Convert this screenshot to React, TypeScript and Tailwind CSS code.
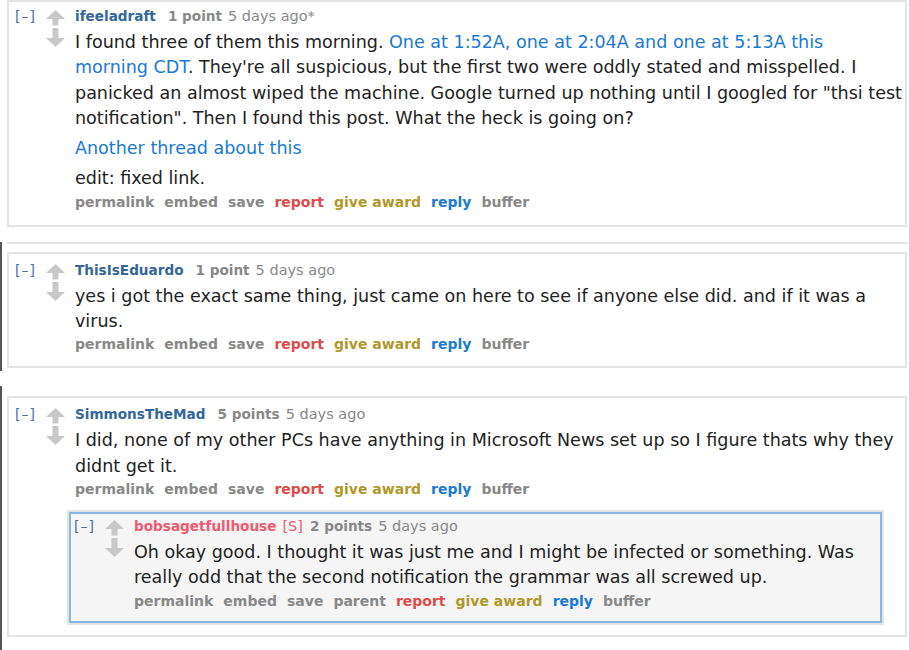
import React from "react";

type Btn = { label: string; color: string };

const GRAY = "#888888";

const baseButtons: Btn[] = [
    { label: "permalink", color: GRAY },
    { label: "embed", color: GRAY },
    { label: "save", color: GRAY },
    { label: "report", color: "#de4b4b" },
    { label: "give award", color: "#b0982a" },
    { label: "reply", color: "#1a7ad4" },
    { label: "buffer", color: GRAY },
];

const nestedButtons: Btn[] = [
    { label: "permalink", color: GRAY },
    { label: "embed", color: GRAY },
    { label: "save", color: GRAY },
    { label: "parent", color: GRAY },
    { label: "report", color: "#de4b4b" },
    { label: "give award", color: "#b0982a" },
    { label: "reply", color: "#1a7ad4" },
    { label: "buffer", color: GRAY },
];

function Arrows() {
    return (
        <svg width="19" height="38" viewBox="0 0 19 38" className="block">
            <path d="M9.5 0 L19 9 H12.5 V15.5 H6.5 V9 H0 Z" fill="#c8c8c8" />
            <path d="M6.5 18 H12.5 V28 H19 L9.5 37 L0 28 H6.5 Z" fill="#c8c8c8" />
        </svg>
    );
}

interface CommentProps {
    user: string;
    submitter?: boolean;
    points: string;
    time: string;
    paragraphs: React.ReactNode[][];
    buttons: Btn[];
}

function CommentBody({ user, submitter, points, time, paragraphs, buttons }: CommentProps) {
    return (
        <div className="flex">
            {/* collapse + votes */}
            <div className="flex w-[60px] shrink-0">
                <span className="w-[22px] text-[14px] leading-[18px] tracking-[1px] text-[#4a70a6]">[–]</span>
                <div className="ml-[9px] mt-[3px]">
                    <Arrows />
                </div>
            </div>

            <div className="min-w-0">
                {/* Tagline */}
                <div className="flex items-baseline text-[13.6px] leading-[18px] whitespace-nowrap">
                    <span className={`font-bold ${submitter ? "text-[#f05a6e]" : "text-[#336699]"}`}>{user}</span>
                    {submitter && <span className="ml-[6px] text-[14.5px] text-[#f05a6e]">[S]</span>}
                    <span className={`font-bold text-[#888] ${submitter ? "ml-[7px]" : "ml-[12px]"}`}>{points}</span>
                    <span className="ml-[6px] text-[14.5px] text-[#888]">{time}</span>
                </div>

                {/* Text */}
                {paragraphs.map((lines, i) => (
                    <div key={i} className="mt-[5px] text-[17.55px] leading-[25.3px] text-[#222]">
                        {lines.map((line, j) => (
                            <div key={j} className="whitespace-nowrap">{line}</div>
                        ))}
                    </div>
                ))}

                {/* Buttons */}
                <div className="mt-[1px] flex gap-[10px] text-[14px] font-bold leading-[18px] whitespace-nowrap">
                    {buttons.map((b) => (
                        <span key={b.label} style={{ color: b.color }}>{b.label}</span>
                    ))}
                </div>
            </div>
        </div>
    );
}

const Link = ({ children }: { children: React.ReactNode }) => (
    <span className="text-[#1a7ad4]">{children}</span>
);

export default function App() {
    return (
        <div className="h-[650px] w-[909px] overflow-hidden bg-white font-['DejaVu_Sans',Verdana,sans-serif]">
            {/* Comment 1 */}
            <div className="ml-[7px] w-[900px] border-2 border-[#e4e4e4] pl-[6px] pt-[5px] pb-[14px]">
                <CommentBody
                    user="ifeeladraft"
                    points="1 point"
                    time="5 days ago*"
                    buttons={baseButtons}
                    paragraphs={[
                        [
                            <>I found three of them this morning. <Link>One at 1:52A, one at 2:04A and one at 5:13A this</Link></>,
                            <><Link>morning CDT</Link>. They're all suspicious, but the first two were oddly stated and misspelled. I</>,
                            <>panicked an almost wiped the machine. Google turned up nothing until I googled for "thsi test</>,
                            <>notification". Then I found this post. What the heck is going on?</>,
                        ],
                        [<Link>Another thread about this</Link>],
                        [<>edit: fixed link.</>],
                    ]}
                />
            </div>

            {/* Comment 2 */}
            <div className="mt-[15px] border-l-2 border-[#555] pl-[5px] pb-[3px]">
                <div className="h-[2px] w-[901px] bg-[#e4e4e4]" />
                <div className="mt-[8px] w-[900px] border-2 border-[#e4e4e4] pl-[6px] pt-[7px] pb-[13px]">
                    <CommentBody
                        user="ThisIsEduardo"
                        points="1 point"
                        time="5 days ago"
                        buttons={baseButtons}
                        paragraphs={[
                            [
                                <>yes i got the exact same thing, just came on here to see if anyone else did. and if it was a</>,
                                <>virus.</>,
                            ],
                        ]}
                    />
                </div>
            </div>

            {/* Comment 3 */}
            <div className="mt-[15px] h-[300px] border-l-2 border-[#555] pl-[5px] pt-[10px]">
                <div className="w-[900px] border-2 border-[#e4e4e4] pt-[7px] pb-[10px]">
                    <div className="pl-[6px]">
                        <CommentBody
                            user="SimmonsTheMad"
                            points="5 points"
                            time="5 days ago"
                            buttons={baseButtons}
                            paragraphs={[
                                [
                                    <>I did, none of my other PCs have anything in Microsoft News set up so I figure thats why they</>,
                                    <>didnt get it.</>,
                                ],
                            ]}
                        />
                    </div>

                    {/* Reply */}
                    <div className="ml-[58px] mr-[21px] mt-[12px] border-2 border-[#e4e4e4]">
                        <div className="border-2 border-[#88b4e0] bg-[#f5f5f5] pl-[3px] pt-[3px] pb-[11px]">
                            <CommentBody
                                user="bobsagetfullhouse"
                                submitter
                                points="2 points"
                                time="5 days ago"
                                buttons={nestedButtons}
                                paragraphs={[
                                    [
                                        <>Oh okay good. I thought it was just me and I might be infected or something. Was</>,
                                        <>really odd that the second notification the grammar was all screwed up.</>,
                                    ],
                                ]}
                            />
                        </div>
                    </div>
                </div>
            </div>
        </div>
    );
}
